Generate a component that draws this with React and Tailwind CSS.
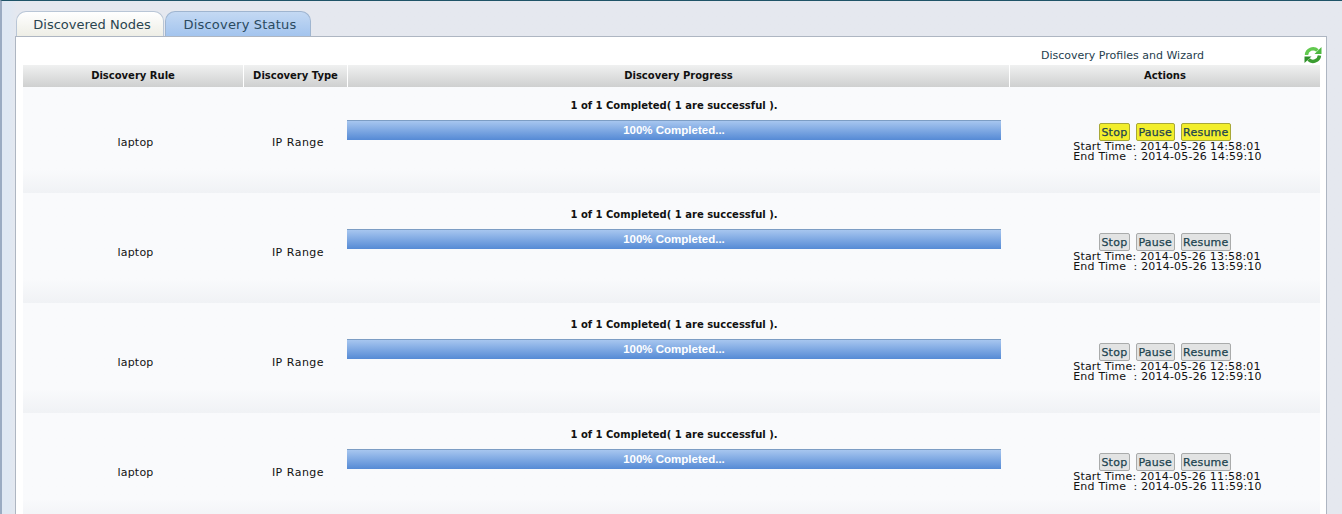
import React from "react";

function Btn({ children, on }) {
  return (
    <span
      className={
        "inline-block h-[18px] leading-[18px] px-[1.5px] text-[11px] tracking-[0.25px] [-webkit-text-stroke:0.25px_#1c4450] text-[#1c4450] rounded-[2px] border " +
        (on
          ? "bg-[#f2ee2c] border-[#a8a838]"
          : "bg-[#e2e3e3] border-[#a9abab]")
      }
    >
      {children}
    </span>
  );
}

function Row({ first, on, start, end }) {
  return (
    <div
      className={
        "flex bg-gradient-to-b from-[#f9fafc] from-[78%] to-[#f0f2f5] text-[11px] text-[#111] tracking-[0.2px] " +
        (first ? "h-[106px]" : "h-[110px]")
      }
    >
      <div className="w-[221px] flex justify-center pl-[4px]">
        <span className={first ? "mt-[48px]" : "mt-[52px]"}>laptop</span>
      </div>
      <div className="w-[103px] flex justify-center pl-[5px]">
        <span className={"tracking-[0.5px] " + (first ? "mt-[48px]" : "mt-[52px]")}>IP Range</span>
      </div>
      <div className={"w-[663px] pr-[9px] " + (first ? "pt-[12px]" : "pt-[15px]")}>
        <div className="h-[13px] leading-[13px] text-center font-bold text-[10px] text-[#111] tracking-normal">
          1 of 1 Completed( 1 are successful ).
        </div>
        <div className="mt-[8px] h-[20px] leading-[18px] text-center text-white font-bold text-[11.5px] tracking-normal font-['Liberation_Sans',sans-serif] bg-gradient-to-b from-[#a7c6ef] to-[#558ad5] border-t border-[#7c9dc4]">
          100% Completed...
        </div>
      </div>
      <div className={"flex-1 flex flex-col items-center " + (first ? "pt-[36px]" : "pt-[40px]")}>
        <div className="flex gap-[6px] h-[18px]">
          <Btn on={on}>Stop</Btn>
          <Btn on={on}>Pause</Btn>
          <Btn on={on}>Resume</Btn>
        </div>
        <div className="leading-[10px] mt-[1px] ml-[5px] whitespace-pre">
          <div>Start Time: {start}</div>
          <div>End Time&nbsp; : {end}</div>
        </div>
      </div>
    </div>
  );
}

function Head({ w, children }) {
  return (
    <div
      className={
        "h-full flex items-center justify-center pb-[2px] font-bold text-[10px] text-[#111] bg-gradient-to-b from-[#f0f1f1] to-[#cfd0d0] " +
        w
      }
    >
      {children}
    </div>
  );
}

export default function App() {
  return (
    <div className="w-[1342px] h-[514px] overflow-hidden bg-gradient-to-r from-[#dfe8f3] from-[0.5%] to-[#e5e8ef] to-[1.1%] border-t border-[#1f5468] border-l-[2px] border-l-[#9aabc2] font-['DejaVu_Sans','Liberation_Sans',sans-serif]">
      <div className="ml-[13px] w-[1312px] mt-[10px]">
        <div className="flex h-[25px] gap-[1px] pl-[1px]">
          <div className="w-[148px] h-[25px] pl-[4px] pt-[1px] rounded-t-[10px] bg-gradient-to-b from-white to-[#eeeee6] border border-b-0 border-[#b9c6d6] text-[13px] text-[#2a4450] flex items-center justify-center">
            Discovered Nodes
          </div>
          <div className="w-[146px] h-[25px] pl-[4px] pt-[1px] rounded-t-[10px] bg-gradient-to-b from-[#c4d9f3] to-[#a3c4ee] border border-b-0 border-[#9fb5d0] text-[13px] tracking-[0.2px] text-[#2a4a60] flex items-center justify-center">
            Discovery Status
          </div>
        </div>
        <div className="bg-white border border-[#aeb6c2] border-b-0 h-[480px] pl-[7px] pr-[5px]">
          <div className="h-[28px] flex relative">
            <span className="ml-[1018px] mt-[12px] h-[13px] leading-[13px] text-[11px] text-[#26404e] whitespace-nowrap">
              Discovery Profiles and Wizard
            </span>
            <svg
              viewBox="0 0 18 18"
              className="absolute left-[1281px] top-[9px] w-[18px] h-[18px]"
              fill="none"
              strokeWidth="3.4"
            >
              <path d="M2.5 9a6.5 6.5 0 0 1 11-4.4" stroke="#62c94f" />
              <path d="M10.5 8h7V1z" fill="#4cb83f" />
              <path d="M15.5 9.5a6.5 6.5 0 0 1-11 4" stroke="#3a9c30" />
              <path d="M7.5 10.5H.5V17z" fill="#2f8f2a" />
            </svg>
          </div>
          <div className="w-[1297px]">
            <div className="h-[22px] flex gap-[1px]">
              <Head w="w-[220px]">Discovery Rule</Head>
              <Head w="w-[103px]">Discovery Type</Head>
              <Head w="w-[661px]">Discovery Progress</Head>
              <Head w="flex-1">Actions</Head>
            </div>
            <Row first on start="2014-05-26 14:58:01" end="2014-05-26 14:59:10" />
            <Row start="2014-05-26 13:58:01" end="2014-05-26 13:59:10" />
            <Row start="2014-05-26 12:58:01" end="2014-05-26 12:59:10" />
            <Row start="2014-05-26 11:58:01" end="2014-05-26 11:59:10" />
          </div>
        </div>
      </div>
    </div>
  );
}
